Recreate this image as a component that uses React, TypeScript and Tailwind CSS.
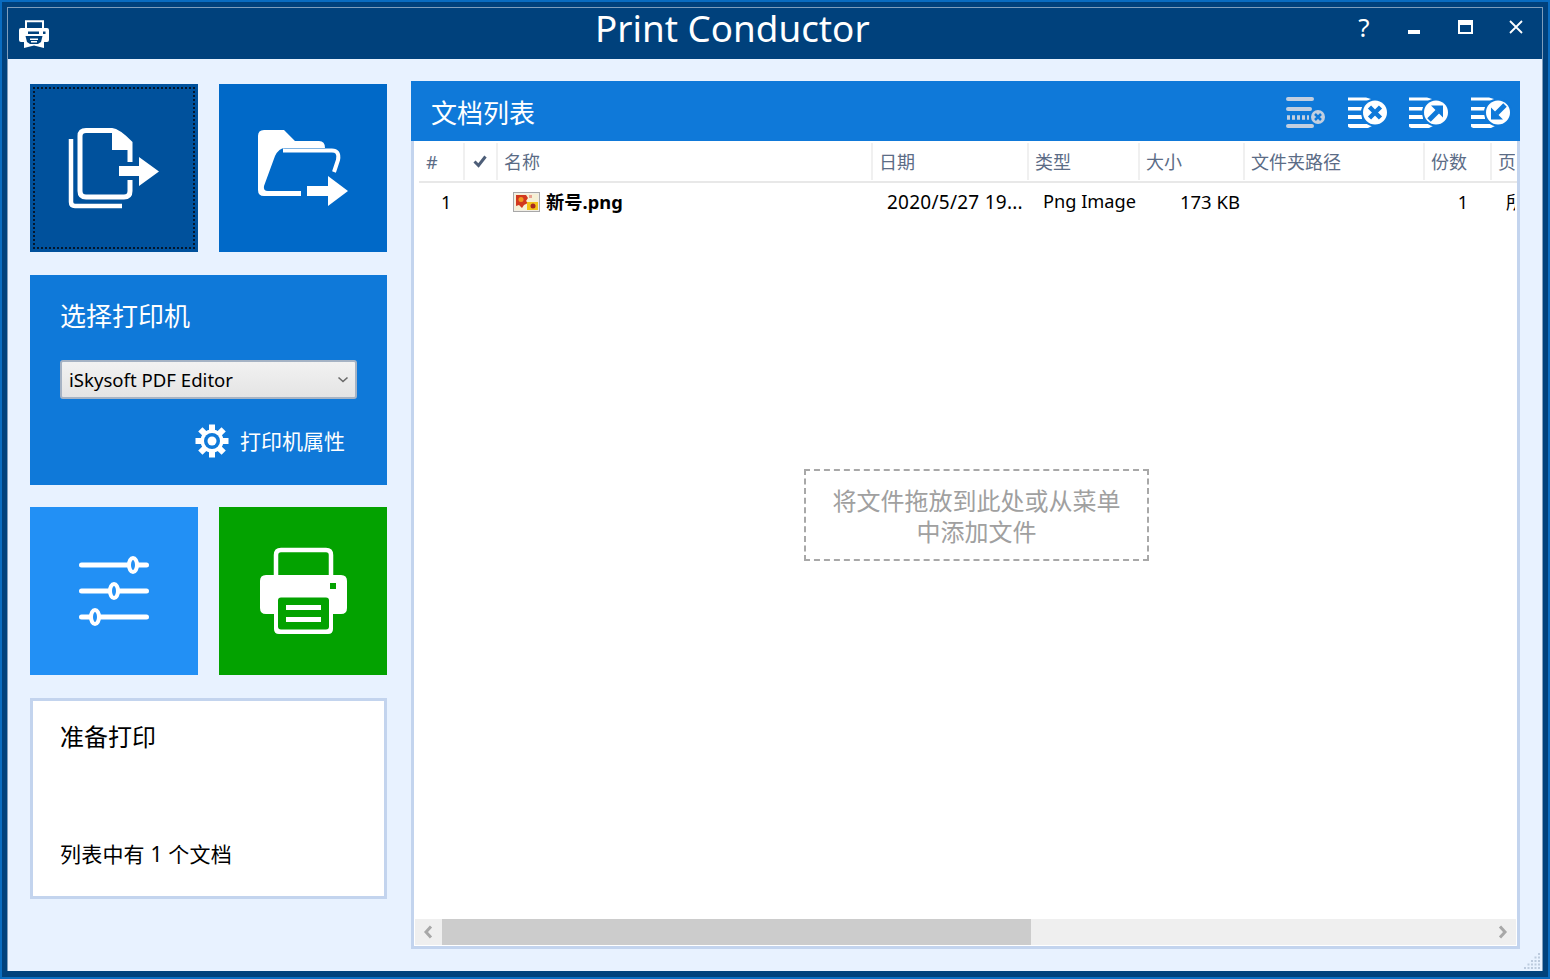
import React from "react";

const SANS = "font-['Noto_Sans','Noto_Sans_CJK_SC',sans-serif]";

function FilesIcon() {
  return (
    <svg width="100" height="100" viewBox="64 118 100 100" fill="none">
      <path d="M71 139V202Q71 206 75 206H122" stroke="#fff" strokeWidth="4.5" />
      <path d="M130 180V191Q130 197 124 197H86Q80 197 80 191V136Q80 130.500 86 130.500H112Q118 131 130 143V162" stroke="#fff" strokeWidth="5" />
      <path d="M112 130L130 143V150H112Z" fill="#fff" />
      <path d="M119 166H139V157L159 171.500L139 186V176H119Z" fill="#fff" />
    </svg>
  );
}

function FolderIcon() {
  return (
    <svg width="100" height="100" viewBox="253 118 100 100" fill="none">
      <path d="M264 130H284L295 141H319Q325 141 325 148H285Q279 148 275 156L264 186Q263 191 268 191H301V196H264Q258 196 258 190V136Q258 130 264 130Z" fill="#fff" />
      <path d="M283 150.500H331Q340 150 338 160L334 172" stroke="#fff" strokeWidth="4" />
      <path d="M307 186H328V176L348 191L328 206V196H307Z" fill="#fff" />
    </svg>
  );
}

function SlidersIcon() {
  return (
    <svg width="100" height="100" viewBox="64 541 100 100" fill="none">
      <path d="M81.500 565H146.500M81.500 591H146.500M81.500 617H146.500" stroke="#fff" strokeWidth="5" strokeLinecap="round" />
      <ellipse cx="133" cy="565" rx="4" ry="7" fill="#2290f5" stroke="#fff" strokeWidth="4" />
      <ellipse cx="114" cy="591" rx="4" ry="7" fill="#2290f5" stroke="#fff" strokeWidth="4" />
      <ellipse cx="95" cy="617" rx="4" ry="7" fill="#2290f5" stroke="#fff" strokeWidth="4" />
    </svg>
  );
}

function PrinterIcon() {
  return (
    <svg width="100" height="100" viewBox="253 541 100 100" fill="none">
      <path d="M276 576V555Q276 550 281 550H326Q331 550 331 555V576" stroke="#fff" strokeWidth="4.500" />
      <path d="M266 575H341Q347 575 347 581V608Q347 614 341 614H333V629Q333 634 328 634H279Q274 634 274 629V614H266Q260 614 260 608V581Q260 575 266 575Z" fill="#fff" />
      <rect x="278" y="597.500" width="51" height="32" rx="3" fill="#03a200" />
      <rect x="286" y="605" width="35" height="5" fill="#fff" />
      <rect x="286" y="617" width="35" height="5" fill="#fff" />
      <rect x="330" y="583" width="6" height="6" fill="#03a200" />
    </svg>
  );
}

function TitleIcon() {
  return (
    <svg width="32" height="30" viewBox="18 15 32 30">
      <path d="M26 26V17.200H43V26" fill="none" stroke="#fff" strokeWidth="2" />
      <path d="M21 24H47Q49 24 49 26V36Q49 38 47 38H44V44L34 41.500L24 44V38H21Q19 38 19 36V26Q19 24 21 24Z" fill="#fff" />
      <rect x="28" y="27.500" width="11" height="2.500" fill="#00417c" />
      <rect x="43" y="27.500" width="2.500" height="2.500" fill="#00417c" />
      <path d="M25.500 32H42.500L41 38L38 40H30L27 38Z" fill="#00417c" />
      <path d="M30 34.500H38V36H30ZM31 37H37V38.500H31Z" fill="#fff" />
    </svg>
  );
}

function Gear() {
  const teeth = [0, 45, 90, 135, 180, 225, 270, 315];
  return (
    <svg width="34" height="34" viewBox="-17 -17 34 34">
      {teeth.map((a) => (
        <rect key={a} x="-3" y="-16.500" width="6" height="8" fill="#fff" transform={`rotate(${a})`} />
      ))}
      <circle r="11.500" fill="#fff" />
      <circle r="8" fill="#0f79d9" />
      <circle r="4.500" fill="#fff" />
    </svg>
  );
}

function ListTools() {
  const lines = "M1348 97.500H1366L1376 100.500H1348ZM1348 107H1362V110.500H1348ZM1348 115H1362V119H1348ZM1348 124H1376L1368 128H1352Q1348 128 1348 126Z";
  const disc = (
    <>
      <path d={lines} fill="#fff" />
      <circle cx="1375" cy="112.500" r="14" fill="#0f79d9" />
      <circle cx="1375" cy="112.500" r="12" fill="#fff" />
    </>
  );
  return (
    <svg width="240" height="40" viewBox="1285 91 240 40">
      <path d="M1288 99H1312M1288 109H1310M1288 126H1312" stroke="#c2cfe0" strokeWidth="4" strokeLinecap="round" />
      <path d="M1287 117.500H1309" stroke="#c2cfe0" strokeWidth="4.500" strokeDasharray="3 2" />
      <circle cx="1318" cy="117" r="8.500" fill="#0f79d9" />
      <circle cx="1318" cy="117" r="7" fill="#c2cfe0" />
      <path d="M1315 114L1321 120M1321 114L1315 120" stroke="#0f79d9" strokeWidth="2.500" />
      <g>
        {disc}
        <path d="M1369.500 107L1380.500 118M1380.500 107L1369.500 118" stroke="#0f79d9" strokeWidth="4.500" />
      </g>
      <g transform="translate(61 0)">
        {disc}
        <path d="M1370 105.500H1382V117.500Z" fill="#0f79d9" />
        <path d="M1368 120L1376.500 111.500" stroke="#0f79d9" strokeWidth="5" />
      </g>
      <g transform="translate(123 0)">
        {disc}
        <path d="M1380 119.500H1368V107.500Z" fill="#0f79d9" />
        <path d="M1382 105L1373.500 113.500" stroke="#0f79d9" strokeWidth="5" />
      </g>
    </svg>
  );
}

function Thumb() {
  return (
    <svg width="27" height="20" viewBox="0 0 27 20" className="shrink-0">
      <rect x="0.500" y="0.500" width="26" height="19" fill="#f1eee6" stroke="#a8a8a8" />
      <rect x="2" y="2" width="23" height="16" fill="#f6f0d4" />
      <path d="M3 3H13L15 6L13 9L15 11L11 13L9 16L6 13L3 14Z" fill="#d2381e" />
      <circle cx="8" cy="7.500" r="2.500" fill="#f09a20" />
      <rect x="14" y="10" width="11" height="8" fill="#f2c318" />
      <circle cx="20" cy="14" r="2.500" fill="#a82a1c" />
      <rect x="16" y="3" width="3" height="3" fill="#e8a090" />
    </svg>
  );
}

function Grip() {
  const dots: [number, number][] = [];
  for (let r = 0; r < 5; r++) for (let c = 0; c <= r; c++) dots.push([15 - c * 3.5, 15 - (r - c) * 3.5]);
  return (
    <svg width="18" height="18" viewBox="0 0 18 18">
      {dots.map(([x, y]) => (
        <rect key={`${x}-${y}`} x={x} y={y} width="2" height="2" fill="#bccbde" />
      ))}
    </svg>
  );
}

const HEAD = [
  { t: "#", c: "pl-[7px]" },
  { t: "✓", c: "" },
  { t: "名称", c: "pl-[6px]" },
  { t: "日期", c: "pl-[6px]" },
  { t: "类型", c: "pl-[6px]" },
  { t: "大小", c: "pl-[6px]" },
  { t: "文件夹路径", c: "pl-[6px]" },
  { t: "份数", c: "pl-[6px]" },
  { t: "页", c: "pl-[6px]" },
];
const COLS = "grid grid-cols-[46px_33px_375px_156px_111px_105px_180px_67px_23px]";

export default function App() {
  return (
    <div className={`w-[1550px] h-[979px] bg-[#0a6cc0] p-[2px] overflow-hidden ${SANS}`}>
      <div className="h-[975px] bg-[#00417c] pt-[5px] pb-[6px] px-[5px] flex flex-col">
        <div className="flex-1 flex flex-col border-t border-l border-r border-[#7f9dbb] min-h-0">
          <div className="h-[51px] shrink-0 flex items-center text-white relative">
            <div className="w-[44px] pl-[10px] shrink-0 flex pt-[1px]"><TitleIcon /></div>
            <div className="ml-[543px] text-[36.8px] leading-none w-[300px] whitespace-nowrap pb-[10px]">Print Conductor</div>
            <div className="ml-auto flex items-center pr-[1px] mb-[14px]">
              <div className="w-[50px] text-center text-[26px] leading-none">?</div>
              <div className="w-[50px] flex justify-center pt-[7px]"><div className="w-[12px] h-[4px] bg-white mt-[4px]" /></div>
              <div className="w-[51px] flex justify-center pl-[1px]"><div className="w-[15px] h-[14px] border-2 border-t-[5px] border-white" /></div>
              <div className="w-[51px] flex justify-center">
                <svg width="16" height="16" viewBox="0 0 16 16"><path d="M2 2L14 14M14 2L2 14" stroke="#fff" strokeWidth="1.800" /></svg>
              </div>
            </div>
          </div>

          <div className="flex-1 bg-[#e8f2ff] flex relative min-h-0">
            <div className="w-[357px] ml-[22px] pt-[25px] shrink-0 flex flex-col">
              <div className="flex justify-between">
                <div className="w-[168px] h-[168px] bg-[#00519c] p-[3px]">
                  <div className="w-full h-full border-2 border-dotted border-[#04162c] flex items-center justify-center"><FilesIcon /></div>
                </div>
                <div className="w-[168px] h-[168px] bg-[#0069c8] flex items-center justify-center"><FolderIcon /></div>
              </div>

              <div className="mt-[23px] h-[210px] bg-[#0f79d9] px-[30px] pt-[22px] text-white">
                <div className="text-[26px] leading-[38px]">选择打印机</div>
                <div className="mt-[25px] h-[39px] rounded-[3px] border-2 border-[#a6b3c4] bg-gradient-to-b from-[#f2f2f2] to-[#e4e4e4] flex items-center justify-between pl-[7px] pr-[6px] text-black text-[18.6px]">
                  <span className="pt-[1px]">iSkysoft PDF Editor</span>
                  <svg width="12" height="8" viewBox="0 0 12 8"><path d="M1.500 1.500L6 5.500L10.500 1.500" fill="none" stroke="#6a6a6a" strokeWidth="1.600" /></svg>
                </div>
                <div className="mt-[25px] flex items-center justify-end gap-[11px] pr-[12px]">
                  <Gear />
                  <span className="text-[21px] leading-[34px]">打印机属性</span>
                </div>
              </div>

              <div className="mt-[22px] flex justify-between">
                <div className="w-[168px] h-[168px] bg-[#2290f5] flex items-center justify-center"><SlidersIcon /></div>
                <div className="w-[168px] h-[168px] bg-[#03a200] flex items-center justify-center"><PrinterIcon /></div>
              </div>

              <div className="mt-[23px] h-[201px] bg-white border-[3px] border-[#c3d4ee] flex flex-col justify-between pl-[27px] pt-[19px] pb-[27px] text-black">
                <div className="text-[24px] leading-[34px]">准备打印</div>
                <div className="text-[21px] leading-[30px] tracking-[0.2px]">列表中有 1 个文档</div>
              </div>
            </div>

            <div className="w-[1109px] ml-[24px] pt-[22px] shrink-0 flex flex-col">
              <div className="h-[60px] bg-[#0f79d9] flex items-center justify-between pl-[20px] text-white">
                <span className="text-[26px] leading-none pt-[4px]">文档列表</span>
                <div className="flex -mr-[5px]"><ListTools /></div>
              </div>
              <div className="h-[808px] border-[3px] border-t-0 border-[#c3d4ee] bg-white flex flex-col">
                <div className={`${COLS} ml-[5px] h-[42px] border-b-2 border-[#e8e8e8] pt-[2px] text-[18px] text-[#5b6c86]`}>
                  {HEAD.map((h, i) => (
                    <div key={i} className={`h-[37px] overflow-hidden whitespace-nowrap leading-[39px] ${h.c} ${i < 8 ? "border-r-2 border-[#f0f0f0]" : ""}`}>
                      {i === 1 ? (
                        <svg width="31" height="37" viewBox="1 0 31 37"><path d="M10.500 18.500L14.500 22.500L21.500 13.500" fill="none" stroke="#4d5e78" strokeWidth="3" /></svg>
                      ) : h.t}
                    </div>
                  ))}
                </div>
                <div className={`${COLS} ml-[5px] h-[38px] items-center text-[18px] text-black`}>
                  <div className="pl-[22px]">1</div>
                  <div />
                  <div className="pl-[15px] flex items-center gap-[6px] font-bold text-[18.3px]"><Thumb /><span>新号.png</span></div>
                  <div className="pl-[14px] whitespace-nowrap overflow-hidden text-[19px] tracking-[0.25px]">2020/5/27 19...</div>
                  <div className="pl-[14px] whitespace-nowrap text-[18.2px]">Png Image</div>
                  <div className="pr-[5px] text-right whitespace-nowrap text-[18.5px]">173 KB</div>
                  <div />
                  <div className="pr-[24px] text-right">1</div>
                  <div className="pl-[14px] overflow-hidden whitespace-nowrap">所有</div>
                </div>
                <div className="flex-1 min-h-0 pt-[248px] pl-[390px]">
                  <div className="w-[345px] h-[92px] pt-[1px] border-2 border-dashed border-[#a8a8a8] flex items-center justify-center text-center text-[24px] leading-[31px] text-[#a0a0a0] px-[20px]">
                    将文件拖放到此处或从菜单中添加文件
                  </div>
                </div>
                <div className="h-[26px] mx-[1px] mb-[1px] bg-[#efefef] flex items-center">
                  <div className="w-[27px] flex justify-center pr-[2px]">
                    <svg width="10" height="14" viewBox="0 0 10 14"><path d="M8 1.500L3 7L8 12.500" fill="none" stroke="#a8a8a8" strokeWidth="3" /></svg>
                  </div>
                  <div className="w-[589px] h-full bg-[#cccccc]" />
                  <div className="ml-auto w-[27px] flex justify-center">
                    <svg width="10" height="14" viewBox="0 0 10 14"><path d="M2 1.500L7 7L2 12.500" fill="none" stroke="#a8a8a8" strokeWidth="3" /></svg>
                  </div>
                </div>
              </div>
            </div>

            <div className="absolute right-[1px] bottom-[1px] flex"><Grip /></div>
          </div>
        </div>
      </div>
    </div>
  );
}
